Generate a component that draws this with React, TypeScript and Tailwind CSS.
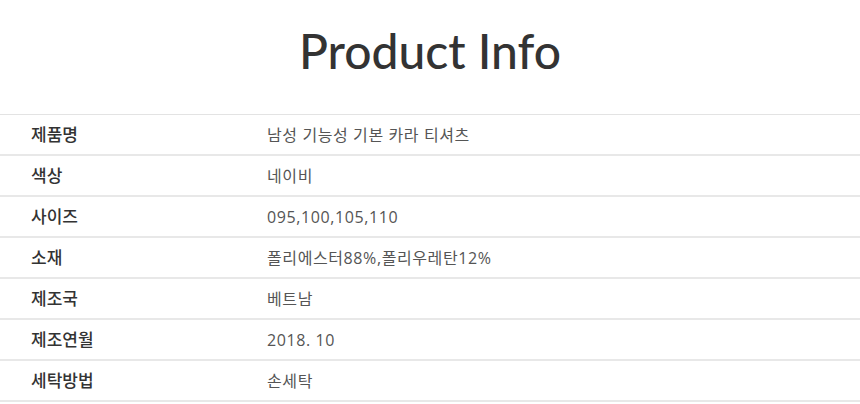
const rows: [string, string][] = [
  ["제품명", "남성 기능성 기본 카라 티셔츠"],
  ["색상", "네이비"],
  ["사이즈", "095,100,105,110"],
  ["소재", "폴리에스터88%,폴리우레탄12%"],
  ["제조국", "베트남"],
  ["제조연월", "2018. 10"],
  ["세탁방법", "손세탁"],
];

export default function App() {
  return (
    <div className="w-[860px] bg-white font-['Open_Sans','Noto_Sans_CJK_KR',sans-serif]">
      <h2 className="pt-[21px] h-[114px] text-center font-['Lato',sans-serif] text-[48px] leading-[60px] font-medium text-[#333]">
        Product Info
      </h2>
      <div className="border-t border-[#e3e3e3]">
        {rows.map(([label, value]) => (
          <div key={label} className="flex h-[41px] items-center border-b-2 border-[#e8e8e8] text-[17px]">
            <div className="w-[267px] pl-[31px] font-medium text-[#333]">{label}</div>
            <div className="text-[16px] tracking-[0.6px] text-[#555]">{value}</div>
          </div>
        ))}
      </div>
    </div>
  );
}
